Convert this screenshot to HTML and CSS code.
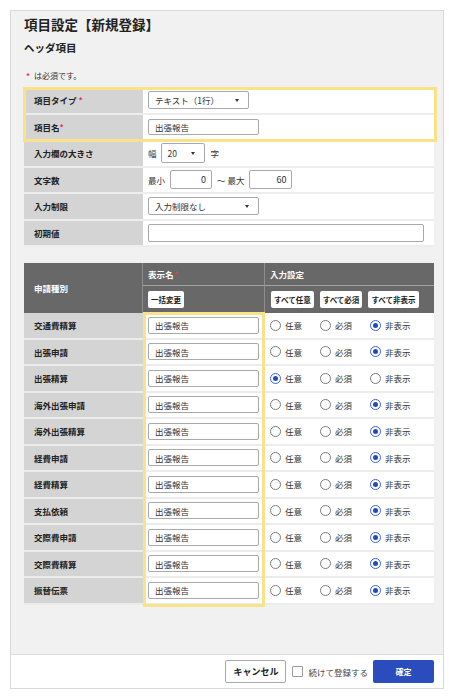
FILE: index.html
```html
<!DOCTYPE html>
<html lang="ja">
<head>
<meta charset="utf-8">
<title>項目設定</title>
<link rel="stylesheet" href="styles.css">
</head>
<body>
<div class="panel">
  <div class="main">
    <h1 class="title">項目設定【新規登録】</h1>
    <h2 class="subtitle">ヘッダ項目</h2>
    <p class="note"><span class="req note-star">*</span>は必須です。</p>

    <div class="form">
      <div class="group">
        <div class="row">
          <div class="lbl">項目タイプ&nbsp;<span class="req">*</span></div>
          <div class="val"><div class="select w101">テキスト（1行）<i class="caret"></i></div></div>
        </div>
        <div class="row">
          <div class="lbl">項目名<span class="req">*</span></div>
          <div class="val"><div class="input w111">出張報告</div></div>
        </div>
        <div class="hl"></div>
      </div>
      <div class="row">
        <div class="lbl">入力欄の大きさ</div>
        <div class="val"><span>幅</span><div class="select w44 tall">20<i class="caret"></i></div><span class="after">字</span></div>
      </div>
      <div class="row">
        <div class="lbl">文字数</div>
        <div class="val gap5"><span>最小</span><div class="input num w42">0</div><span>〜 最大</span><div class="input num w43">60</div></div>
      </div>
      <div class="row">
        <div class="lbl">入力制限</div>
        <div class="val"><div class="select w111">入力制限なし<i class="caret"></i></div></div>
      </div>
      <div class="row">
        <div class="lbl">初期値</div>
        <div class="val"><div class="input w276 h18"></div></div>
      </div>
    </div>

    <div class="list">
      <div class="thead">
        <div class="th-kind">申請種別</div>
        <div class="th-name">表示名<span class="req">*</span></div>
        <div class="th-set">入力設定</div>
        <div class="th-b1"><span class="hbtn">一括変更</span></div>
        <div class="th-b2"><span class="hbtn">すべて任意</span><span class="hbtn">すべて必須</span><span class="hbtn">すべて非表示</span></div>
      </div>
      <div class="tbody">
        <div class="trow"><div class="tk">交通費精算</div><div class="tn"><div class="input w111 h17">出張報告</div></div><div class="ts"><span class="opt"><i class="radio"></i>任意</span><span class="opt"><i class="radio"></i>必須</span><span class="opt"><i class="radio on"></i>非表示</span></div></div>
        <div class="trow"><div class="tk">出張申請</div><div class="tn"><div class="input w111 h17">出張報告</div></div><div class="ts"><span class="opt"><i class="radio"></i>任意</span><span class="opt"><i class="radio"></i>必須</span><span class="opt"><i class="radio on"></i>非表示</span></div></div>
        <div class="trow"><div class="tk">出張精算</div><div class="tn"><div class="input w111 h17">出張報告</div></div><div class="ts"><span class="opt"><i class="radio on"></i>任意</span><span class="opt"><i class="radio"></i>必須</span><span class="opt"><i class="radio"></i>非表示</span></div></div>
        <div class="trow"><div class="tk">海外出張申請</div><div class="tn"><div class="input w111 h17">出張報告</div></div><div class="ts"><span class="opt"><i class="radio"></i>任意</span><span class="opt"><i class="radio"></i>必須</span><span class="opt"><i class="radio on"></i>非表示</span></div></div>
        <div class="trow"><div class="tk">海外出張精算</div><div class="tn"><div class="input w111 h17">出張報告</div></div><div class="ts"><span class="opt"><i class="radio"></i>任意</span><span class="opt"><i class="radio"></i>必須</span><span class="opt"><i class="radio on"></i>非表示</span></div></div>
        <div class="trow"><div class="tk">経費申請</div><div class="tn"><div class="input w111 h17">出張報告</div></div><div class="ts"><span class="opt"><i class="radio"></i>任意</span><span class="opt"><i class="radio"></i>必須</span><span class="opt"><i class="radio on"></i>非表示</span></div></div>
        <div class="trow"><div class="tk">経費精算</div><div class="tn"><div class="input w111 h17">出張報告</div></div><div class="ts"><span class="opt"><i class="radio"></i>任意</span><span class="opt"><i class="radio"></i>必須</span><span class="opt"><i class="radio on"></i>非表示</span></div></div>
        <div class="trow"><div class="tk">支払依頼</div><div class="tn"><div class="input w111 h17">出張報告</div></div><div class="ts"><span class="opt"><i class="radio"></i>任意</span><span class="opt"><i class="radio"></i>必須</span><span class="opt"><i class="radio on"></i>非表示</span></div></div>
        <div class="trow"><div class="tk">交際費申請</div><div class="tn"><div class="input w111 h17">出張報告</div></div><div class="ts"><span class="opt"><i class="radio"></i>任意</span><span class="opt"><i class="radio"></i>必須</span><span class="opt"><i class="radio on"></i>非表示</span></div></div>
        <div class="trow"><div class="tk">交際費精算</div><div class="tn"><div class="input w111 h17">出張報告</div></div><div class="ts"><span class="opt"><i class="radio"></i>任意</span><span class="opt"><i class="radio"></i>必須</span><span class="opt"><i class="radio on"></i>非表示</span></div></div>
        <div class="trow"><div class="tk">振替伝票</div><div class="tn"><div class="input w111 h17">出張報告</div></div><div class="ts"><span class="opt"><i class="radio"></i>任意</span><span class="opt"><i class="radio"></i>必須</span><span class="opt"><i class="radio on"></i>非表示</span></div></div>
        <div class="hl2"></div>
      </div>
    </div>
  </div>

  <div class="footer">
    <span class="btn-cancel">キャンセル</span>
    <label class="chk"><i class="box"></i>続けて登録する</label>
    <span class="btn-ok">確定</span>
  </div>
</div>
</body>
</html>
```

FILE: styles.css
```css
* { box-sizing: border-box; margin: 0; padding: 0; }

body {
  font-family: "Noto Sans CJK JP", "Noto Sans", sans-serif;
  color: #222;
  background: #fff;
}

.panel {
  margin: 10px 0 0 10px;
  width: 434px;
  height: 679px;
  border: 1px solid #d9d9d9;
  background: #f1f1f1;
  display: flex;
  flex-direction: column;
}

.main {
  flex: 1;
  padding: 4px 9px 0 13px;
  overflow: hidden;
}

.title { font-size: 13.5px; line-height: 18px; font-weight: 700; }
.subtitle { font-size: 10.5px; line-height: 14px; font-weight: 700; margin-top: 8px; }
.note { font-size: 8px; line-height: 12px; margin-top: 15px; color: #333; }
.note-star { display: inline-block; margin: 0 4px 0 2px; font-weight: 700; }
.req { color: #e8334f; }

/* form */
.form { margin-top: 6px; }
.group { position: relative; }
.hl {
  position: absolute;
  left: -1px; right: -3px; top: -1px; bottom: -1px;
  border: 3px solid #fae28b;
  pointer-events: none;
}
.row { display: grid; grid-template-columns: 119px 1fr; height: 26.5px; }
.lbl {
  background: #d4d4d4;
  border-bottom: 2px solid #ededed;
  font-size: 8.5px;
  font-weight: 700;
  padding-left: 10px;
  display: flex;
  align-items: center;
}
.val {
  background: #fff;
  border-bottom: 2px solid #ededed;
  padding-left: 5px;
  display: flex;
  align-items: center;
  gap: 4px;
  font-size: 8.5px;
  color: #333;
}
.val.gap5 { gap: 5px; }
.after { margin-left: 2px; }

.select {
  height: 18px;
  border: 1px solid #a9a9a9;
  border-radius: 2px;
  background: #fff;
  display: flex;
  align-items: center;
  padding: 0 9px 0 6px;
  font-size: 8.5px;
  color: #333;
}
.select.tall { height: 20px; }
.caret {
  margin-left: auto;
  width: 0; height: 0;
  border-top: 3px solid #333;
  border-left: 2px solid transparent;
  border-right: 2px solid transparent;
}
.input {
  height: 16px;
  border: 1px solid #a9a9a9;
  border-radius: 2px;
  background: #fff;
  padding: 0 6px;
  display: flex;
  align-items: center;
  font-size: 8.5px;
  color: #333;
}
.input.num { justify-content: flex-end; height: 19px; font-size: 9px; padding-right: 5px; }
.h17 { height: 17px; }
.h18 { height: 18px; }
.w42 { width: 42px; }
.w43 { width: 43px; }
.w44 { width: 44px; }
.w101 { width: 101px; }
.w111 { width: 111px; }
.w276 { width: 276px; }

/* list table */
.list { margin-top: 16px; }
.thead {
  display: grid;
  grid-template-columns: 119px 122px 1fr;
  grid-template-rows: 23px 27px;
  background: #686868;
  color: #fff;
  font-size: 8.5px;
  font-weight: 700;
}
.th-kind {
  grid-row: 1 / 3;
  display: flex;
  align-items: center;
  padding-left: 10px;
  border-right: 1px solid #8e8e8e;
}
.th-name, .th-set {
  display: flex;
  align-items: center;
  padding-left: 5px;
  border-bottom: 1px solid #a2a2a2;
}
.th-name { border-right: 1px solid #8e8e8e; }
.th-b1 {
  display: flex;
  align-items: center;
  padding-left: 5px;
  border-right: 1px solid #8e8e8e;
}
.th-b2 {
  display: flex;
  align-items: center;
  padding-left: 6px;
  gap: 6px;
}
.hbtn {
  background: #fff;
  color: #222;
  border-radius: 2px;
  height: 17px;
  padding: 0 3px;
  font-size: 7.5px;
  font-weight: 700;
  display: flex;
  align-items: center;
}

.tbody { position: relative; }
.trow { display: grid; grid-template-columns: 119px 122px 1fr; height: 26.5px; }
.trow > div {
  border-bottom: 2px solid #ececec;
  display: flex;
  align-items: center;
  font-size: 8.5px;
}
.tk { background: #d4d4d4; padding-left: 10px; font-weight: 700; }
.tn { background: #fff; padding-left: 5px; }
.ts { background: #fff; padding-left: 5px; color: #333; }
.opt { width: 50px; display: flex; align-items: center; gap: 4px; }
.radio {
  width: 11px; height: 11px;
  border-radius: 50%;
  border: 1px solid #7b7b7b;
  background: #fff;
  position: relative;
  flex: none;
}
.radio.on { border-color: #3b64d6; }
.radio.on::after {
  content: "";
  position: absolute;
  inset: 2px;
  border-radius: 50%;
  background: #2349c1;
}
.hl2 {
  position: absolute;
  left: 119px; width: 122px;
  top: -1px; bottom: -2px;
  border: 3px solid #fae28b;
  pointer-events: none;
}

/* footer */
.footer {
  height: 34px;
  border-top: 1px solid #dcdcdc;
  background: #fff;
  display: flex;
  align-items: center;
  justify-content: flex-end;
  padding-right: 9px;
}
.btn-cancel {
  width: 61px; height: 23px;
  border: 1px solid #a8a8a8;
  border-radius: 2px;
  background: #fff;
  font-size: 9px;
  font-weight: 700;
  display: flex;
  align-items: center;
  justify-content: center;
}
.chk {
  margin-left: 6px;
  display: flex;
  align-items: center;
  gap: 5px;
  font-size: 8.5px;
  color: #444;
}
.box {
  width: 11px; height: 11px;
  border: 1px solid #9a9a9a;
  border-radius: 1px;
  background: #fff;
}
.btn-ok {
  margin-left: 5px;
  width: 61px; height: 23px;
  background: #2b4cbd;
  color: #fff;
  border-radius: 2px;
  font-size: 8px;
  font-weight: 700;
  display: flex;
  align-items: center;
  justify-content: center;
}
```
